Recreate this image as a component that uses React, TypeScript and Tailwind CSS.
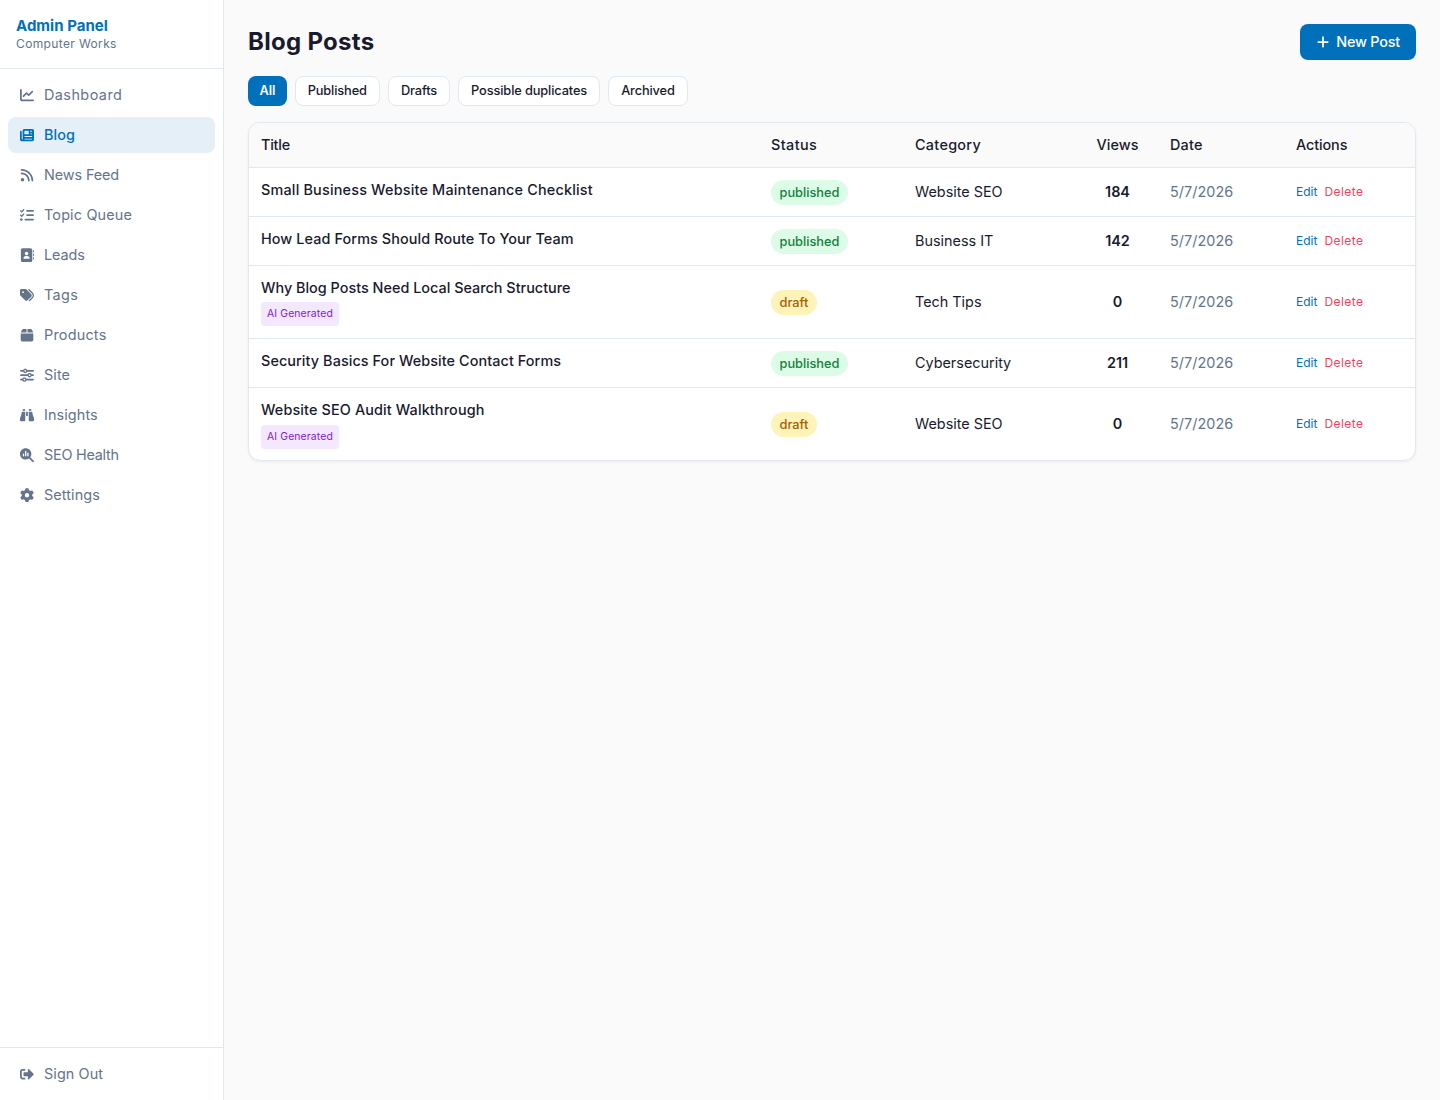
import type { ReactNode } from 'react';
import { FaSignOutAlt } from 'react-icons/fa';
import {
  FaAddressBook,
  FaBinoculars,
  FaBox,
  FaChartLine,
  FaGear,
  FaListCheck,
  FaMagnifyingGlassChart,
  FaNewspaper,
  FaPlus,
  FaRss,
  FaSliders,
  FaTags,
} from 'react-icons/fa6';

const navItems: { label: string; icon: ReactNode; tracking: string; active?: boolean }[] = [
  { label: 'Dashboard', icon: <FaChartLine />, tracking: 'tracking-[0.45px]' },
  { label: 'Blog', icon: <FaNewspaper />, tracking: 'tracking-[0.1px]', active: true },
  { label: 'News Feed', icon: <FaRss />, tracking: 'tracking-[-0.1px]' },
  { label: 'Topic Queue', icon: <FaListCheck />, tracking: 'tracking-[0.17px]' },
  { label: 'Leads', icon: <FaAddressBook />, tracking: 'tracking-[-0.05px]' },
  { label: 'Tags', icon: <FaTags />, tracking: 'tracking-[0.35px]' },
  { label: 'Products', icon: <FaBox />, tracking: 'tracking-[0.22px]' },
  { label: 'Site', icon: <FaSliders />, tracking: 'tracking-[0.1px]' },
  { label: 'Insights', icon: <FaBinoculars />, tracking: 'tracking-[0.1px]' },
  { label: 'SEO Health', icon: <FaMagnifyingGlassChart />, tracking: 'tracking-[-0.25px]' },
  { label: 'Settings', icon: <FaGear />, tracking: 'tracking-[0.1px]' },
];

const filters = ['All', 'Published', 'Drafts', 'Possible duplicates', 'Archived'];

const posts = [
  { title: 'Small Business Website Maintenance Checklist', tracking: 'tracking-[0.19px]', status: 'published', category: 'Website SEO', views: 184 },
  { title: 'How Lead Forms Should Route To Your Team', tracking: 'tracking-[0.1px]', status: 'published', category: 'Business IT', views: 142 },
  { title: 'Why Blog Posts Need Local Search Structure', tracking: 'tracking-[0.01px]', status: 'draft', category: 'Tech Tips', views: 0, ai: true },
  { title: 'Security Basics For Website Contact Forms', tracking: 'tracking-[0.08px]', status: 'published', category: 'Cybersecurity', views: 211 },
  { title: 'Website SEO Audit Walkthrough', tracking: 'tracking-[0.13px]', status: 'draft', category: 'Website SEO', views: 0, ai: true },
];

const Sidebar = () => (
  <aside className="flex w-[224px] shrink-0 flex-col border-r border-[#e2e8f0] bg-white">
    <div className="h-[69px] border-b border-[#e2e8f0] px-4 pt-[17px]">
      <div className="text-[15px] leading-[18px] font-bold tracking-[0.03px] text-[#0070bb]">Admin Panel</div>
      <div className="text-[12px] leading-[17px] tracking-[0.37px] text-[#64748b]">Computer Works</div>
    </div>
    <nav className="flex flex-col gap-1 p-2">
      {navItems.map((item) => (
        <div
          key={item.label}
          className={
            item.active
              ? `flex h-9 items-center gap-[10px] rounded-lg bg-[#e5eff8] px-3 text-[14.4px] font-medium text-[#0070bb] ${item.tracking}`
              : `flex h-9 items-center gap-[10px] rounded-lg px-3 text-[14.4px] text-[#64748b] ${item.tracking}`
          }
        >
          <span className="flex w-[14px] justify-center text-[14.4px]">{item.icon}</span>
          {item.label}
        </div>
      ))}
    </nav>
    <div className="mt-auto h-[53px] border-t border-[#e2e8f0] p-2">
      <div className="flex h-9 items-center gap-[10px] px-3 text-[14.4px] tracking-[0.1px] text-[#64748b]">
        <span className="flex w-[14px] justify-center text-[14.4px]">
          <FaSignOutAlt />
        </span>
        Sign Out
      </div>
    </div>
  </aside>
);

const PostsTable = () => (
  <div className="overflow-hidden rounded-xl border border-[#e2e8f0] bg-white shadow-[0_1px_3px_rgba(0,0,0,0.06)]">
    <table className="w-full table-fixed border-collapse text-left text-[14.4px] text-[#1a1a2e]">
      <colgroup>
        <col className="w-[510px]" />
        <col className="w-[144px]" />
        <col className="w-[174px]" />
        <col className="w-[81px]" />
        <col className="w-[126px]" />
        <col />
      </colgroup>
      <thead className="bg-[#fafafa]">
        <tr className="h-[44px] border-b border-[#e2e8f0]">
          <th className="px-3 font-medium tracking-[-0.2px]">Title</th>
          <th className="px-3 font-medium tracking-[0.4px]">Status</th>
          <th className="px-3 font-medium tracking-[0.3px]">Category</th>
          <th className="px-3 text-center font-medium tracking-[0.1px]">Views</th>
          <th className="px-3 font-medium tracking-[0.2px]">Date</th>
          <th className="px-3 font-medium tracking-[-0.1px]">Actions</th>
        </tr>
      </thead>
      <tbody>
        {posts.map((post) => (
          <tr key={post.title} className={post.ai ? 'h-[73px] border-b border-[#e2e8f0] last:border-b-0' : 'h-[49px] border-b border-[#e2e8f0]'}>
            <td className={post.ai ? 'px-3' : 'px-3 pb-[4px]'}>
              <div className={`font-medium ${post.tracking}`}>{post.title}</div>
              {post.ai && (
                <span className="mt-1 inline-block rounded bg-[#f3e8ff] px-[6px] py-[3px] text-[10.4px] leading-[18px] tracking-[0.13px] text-[#7e22ce]">
                  AI Generated
                </span>
              )}
            </td>
            <td className="px-3 pt-[2px]">
              <span
                className={
                  post.status === 'draft'
                    ? 'inline-block rounded-full bg-[#fef3b8] px-[8.5px] text-[12.8px] leading-[25px] font-medium text-[#a16207]'
                    : 'inline-block rounded-full bg-[#dcfce7] px-[8.5px] text-[12.8px] leading-[25px] font-medium text-[#15803d]'
                }
              >
                {post.status}
              </span>
            </td>
            <td className="px-3">{post.category}</td>
            <td className="px-3 text-center font-semibold">{post.views}</td>
            <td className="px-3 tracking-[0.05px] text-[#64748b]">5/7/2026</td>
            <td className="px-3 text-[12px]">
              <span className="text-[#0070bb]">Edit</span>
              <span className="ml-[7px] tracking-[0.45px] text-[#f43f5e]">Delete</span>
            </td>
          </tr>
        ))}
      </tbody>
    </table>
  </div>
);

const App = () => (
  <div className="flex min-h-[1100px] bg-[#fafafa] font-['Inter',sans-serif]">
    <Sidebar />
    <main className="flex-1 px-6 py-6">
      <div className="flex h-9 items-center justify-between">
        <h1 className="text-[24px] font-bold tracking-[0.3px] text-[#1a1a2e]">Blog Posts</h1>
        <button className="flex h-9 items-center gap-[6px] rounded-lg bg-[#0070bb] px-4 text-[14.4px] font-medium tracking-[-0.2px] text-white">
          <FaPlus className="text-[14px]" />
          New Post
        </button>
      </div>
      <div className="mt-4 mb-4 flex gap-2">
        {filters.map((filter) => (
          <button
            key={filter}
            className={
              filter === 'All'
                ? 'h-[30px] rounded-lg bg-[#0070bb] px-[11.5px] text-[12.8px] font-semibold tracking-[-0.12px] text-white'
                : 'h-[30px] rounded-lg border border-[#e2e8f0] bg-white px-3 text-[12.8px] font-medium tracking-[-0.12px] text-[#1a1a2e]'
            }
          >
            {filter}
          </button>
        ))}
      </div>
      <PostsTable />
    </main>
  </div>
);

export default App;
